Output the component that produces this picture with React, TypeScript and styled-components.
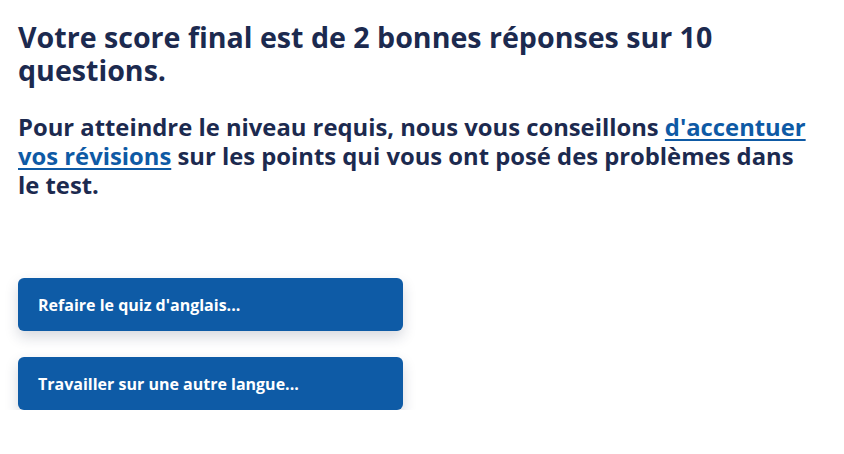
import React from "react";
import styled, { createGlobalStyle } from "styled-components";

const Global = createGlobalStyle`
  html, body { margin: 0; padding: 0; background: #ffffff; }
  body { font-family: "Open Sans", "Noto Sans", sans-serif; }
`;

const Page = styled.main`
  padding: 20px 18px 0 18px;
  display: flex;
  flex-direction: column;
`;

const Title = styled.h1`
  margin: 0;
  font-size: 28.6px;
  line-height: 33px;
  font-weight: 700;
  color: #1c2a4f;
  letter-spacing: 0;
`;

const Lead = styled.p`
  margin: 27px 0 0 0;
  max-width: 794px;
  font-size: 23.8px;
  line-height: 29px;
  font-weight: 700;
  color: #1c2a4f;
`;

const Link = styled.a`
  color: #0e5aa5;
  text-decoration: underline;
  text-decoration-thickness: 2px;
  text-underline-offset: 3px;
`;

const Actions = styled.div`
  margin-top: 78px;
  display: flex;
  flex-direction: column;
  gap: 26px;
`;

const ActionButton = styled.button`
  width: 385px;
  height: 53px;
  border: none;
  border-radius: 6px;
  background: #0e5ba6;
  color: #ffffff;
  font-family: inherit;
  font-size: 16px;
  font-weight: 700;
  text-align: left;
  padding: 0 20px;
  box-shadow: 0 6px 14px rgba(30, 40, 70, 0.18);
  cursor: pointer;
`;

export default function App() {
  return (
    <>
      <Global />
      <Page>
        <Title>Votre score final est de 2 bonnes réponses sur 10 questions.</Title>
        <Lead>
          Pour atteindre le niveau requis, nous vous conseillons{" "}
          <Link href="#">d'accentuer vos révisions</Link> sur les points qui vous ont posé des
          problèmes dans le test.
        </Lead>
        <Actions>
          <ActionButton>Refaire le quiz d'anglais...</ActionButton>
          <ActionButton>Travailler sur une autre langue...</ActionButton>
        </Actions>
      </Page>
    </>
  );
}
